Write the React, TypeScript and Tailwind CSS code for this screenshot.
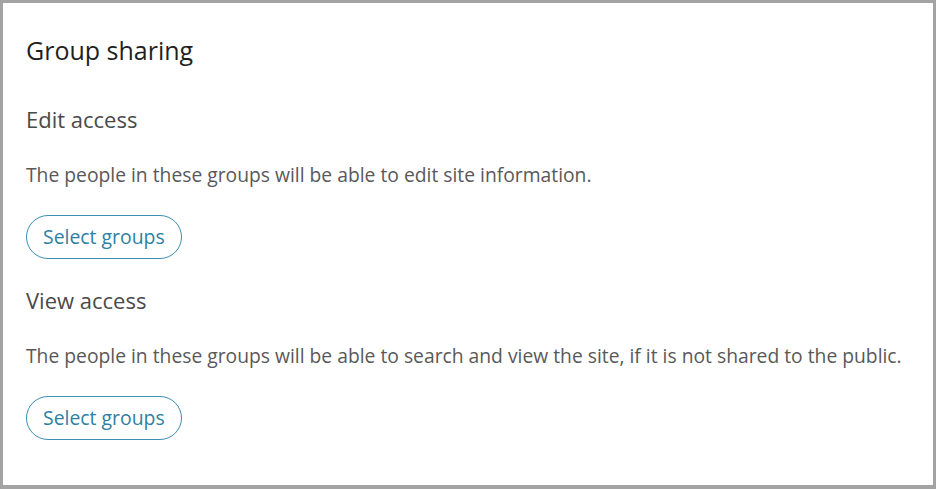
export default function App() {
  const font = { fontFamily: "'Open Sans', sans-serif" };
  return (
    <div className="h-[489px] w-[936px] bg-[#a3a3a3] p-[3px]" style={font}>
      <div className="h-[482px] bg-white px-[23px] pt-[31px]">
        <h2 className="text-[25px] leading-[32px] text-[#1f1f1f]">Group sharing</h2>

        <section className="mt-[39px]">
          <h3 className="text-[22px] leading-[28px] text-[#4a4a4a]">Edit access</h3>
          <p className="mt-[29px] text-[19.3px] leading-[26px] text-[#595959]">
            The people in these groups will be able to edit site information.
          </p>
          <button className="mt-[27px] h-[44px] rounded-full border border-[#3a8fb3] px-[16px] text-[19.4px] text-[#2e7fa3]">
            Select groups
          </button>
        </section>

        <section className="mt-[27px]">
          <h3 className="text-[22px] leading-[28px] text-[#4a4a4a]">View access</h3>
          <p className="mt-[29px] text-[19.3px] leading-[26px] text-[#595959]">
            The people in these groups will be able to search and view the site, if it is not shared to the public.
          </p>
          <button className="mt-[27px] h-[44px] rounded-full border border-[#3a8fb3] px-[16px] text-[19.4px] text-[#2e7fa3]">
            Select groups
          </button>
        </section>
      </div>
    </div>
  );
}
